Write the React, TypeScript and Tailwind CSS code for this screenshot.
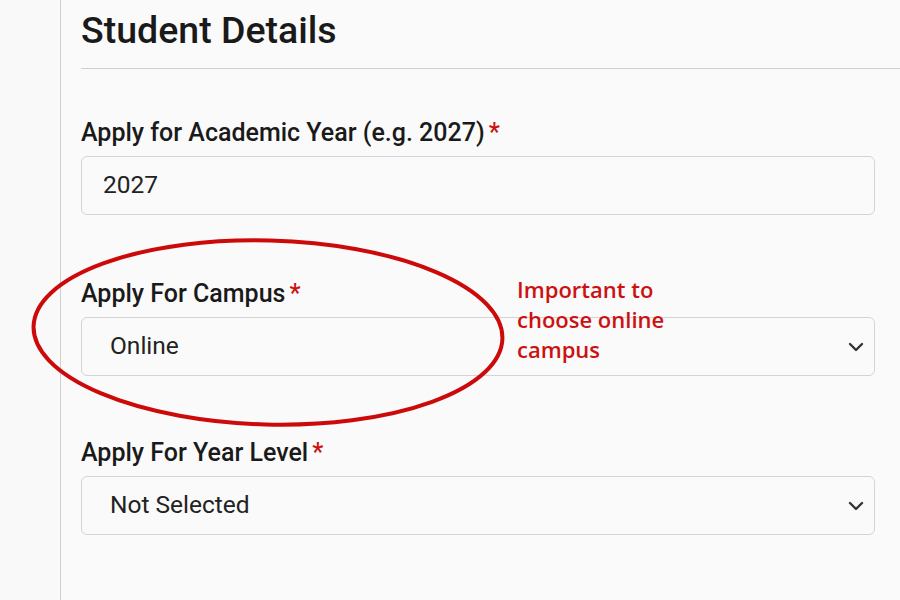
import React from "react";

function Chevron() {
  return (
    <svg width="16" height="10" viewBox="0 0 16 10" fill="none">
      <path d="M2 2l6 6 6-6" stroke="#333" strokeWidth="2.4" strokeLinecap="round" strokeLinejoin="round" />
    </svg>
  );
}

function Label({ text }: { text: string }) {
  return (
    <div className="h-[28px] text-[25px] leading-[28px] font-medium text-[#1a1a1a] mb-[9px] whitespace-nowrap">
      {text}
      <span className="text-[#cc1111] ml-[4px]">*</span>
    </div>
  );
}

function SelectBox({ value }: { value: string }) {
  return (
    <div className="h-[59px] rounded-[6px] border border-[#d4d4d4] bg-[#fafafa] flex items-center justify-between pl-[28px] pr-[10px] text-[24.5px] text-[#222]">
      <span>{value}</span>
      <Chevron />
    </div>
  );
}

export default function App() {
  return (
    <div className="relative w-[900px] h-[600px] overflow-hidden bg-[#fafafa] flex" style={{ fontFamily: "Roboto, 'Liberation Sans', sans-serif" }}>
      <div className="w-[61px] shrink-0 border-r border-[#cfcfcf] bg-[#f9f9f9]" />
      <div className="flex-1 pl-[20px] pr-[25px]">
        <div className="pt-[10px] pb-[18px] border-b border-[#cfcfcf] mr-[-25px]">
          <h1 className="text-[37.5px] leading-[40px] font-medium text-[#1a1a1a] whitespace-nowrap">Student Details</h1>
        </div>
        <div className="flex flex-col pt-[50px]">
          <div>
            <Label text="Apply for Academic Year (e.g. 2027)" />
            <div className="h-[59px] rounded-[6px] border border-[#d4d4d4] bg-[#fafafa] flex items-center pl-[21px] text-[24.5px] text-[#222]">
              2027
            </div>
          </div>
          <div className="mt-[65px]">
            <Label text="Apply For Campus" />
            <SelectBox value="Online" />
          </div>
          <div className="mt-[63px]">
            <Label text="Apply For Year Level" />
            <SelectBox value="Not Selected" />
          </div>
        </div>
      </div>

      <svg className="absolute left-0 top-0 pointer-events-none" width="900" height="600" viewBox="0 0 900 600">
        <ellipse cx="268" cy="332.5" rx="234.5" ry="92" fill="none" stroke="#cc0a0a" strokeWidth="4" transform="rotate(1.5 268 332)" />
      </svg>
      <div
        className="absolute left-[517px] top-[274px] text-[22px] leading-[30px] font-semibold text-[#cc1111] whitespace-nowrap"
        style={{ fontFamily: "'Open Sans', 'Noto Sans', sans-serif" }}
      >
        Important to
        <br />
        choose online
        <br />
        campus
      </div>
    </div>
  );
}
